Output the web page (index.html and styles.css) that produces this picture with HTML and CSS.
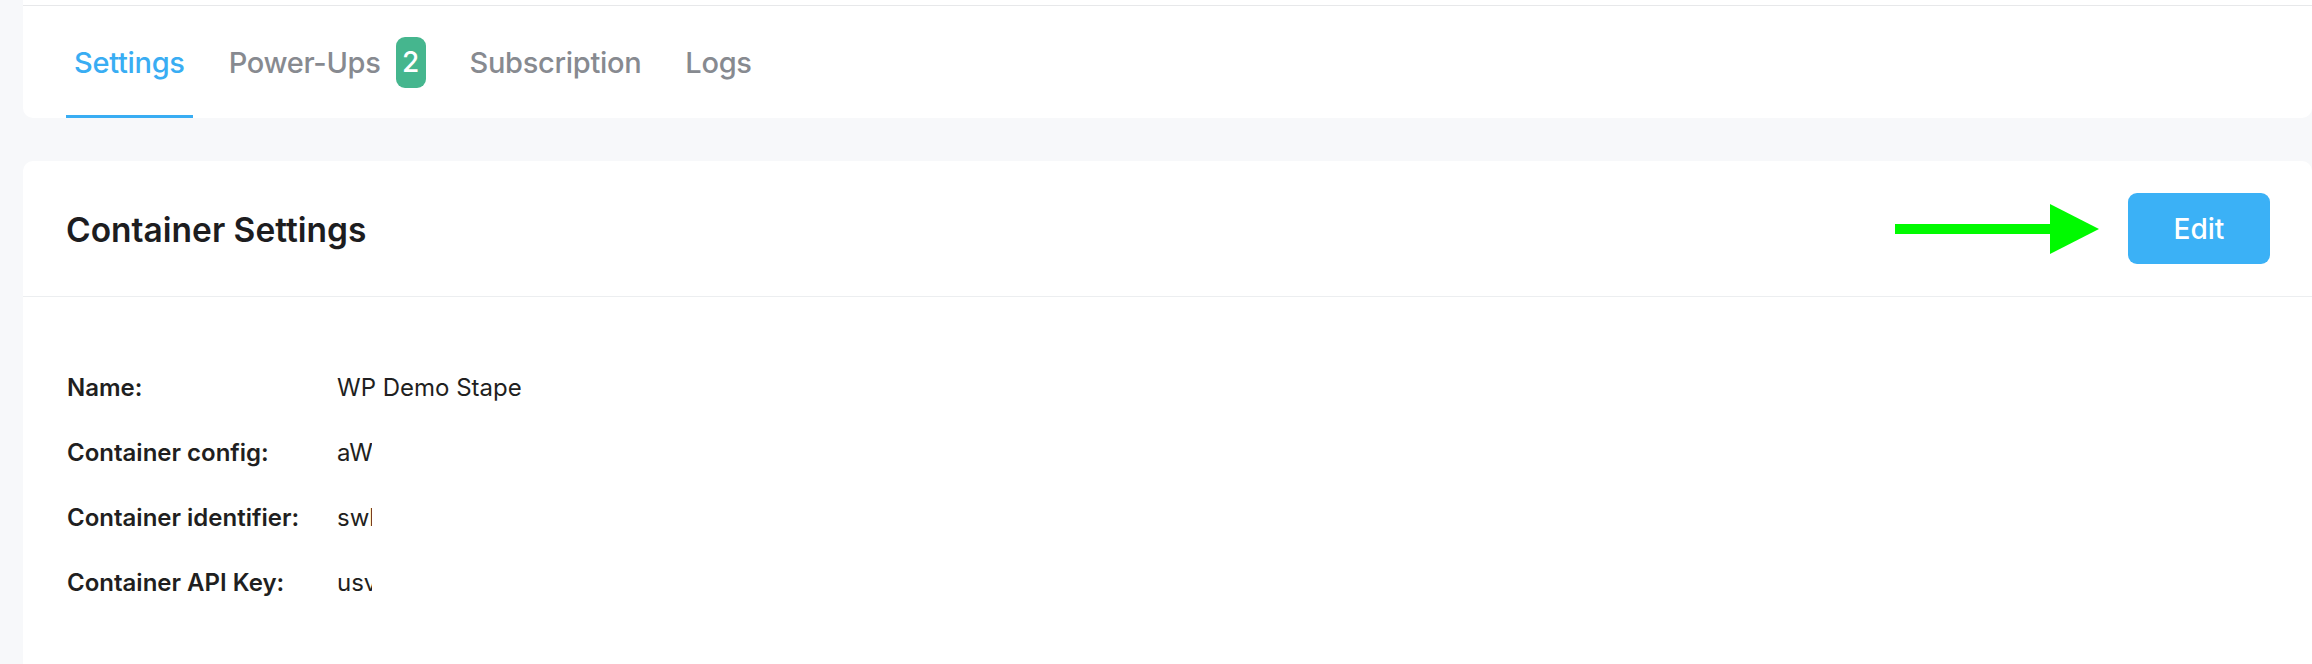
FILE: index.html
```html
<!DOCTYPE html>
<html lang="en">
<head>
<meta charset="utf-8">
<title>Container Settings</title>
<link rel="stylesheet" href="styles.css">
</head>
<body>
<div class="page">
  <div class="tabs-card">
    <div class="tabs-top"></div>
    <nav class="tabs">
      <a class="tab active">Settings</a>
      <a class="tab">Power-Ups<span class="badge">2</span></a>
      <a class="tab">Subscription</a>
      <a class="tab">Logs</a>
    </nav>
  </div>

  <section class="panel">
    <header class="panel-head">
      <h2 class="panel-title">Container Settings</h2>
      <div class="panel-actions">
        <svg class="arrow" width="204" height="50" viewBox="0 0 204 50" aria-hidden="true">
          <rect x="0" y="20" width="156" height="10" fill="#00fa00"/>
          <polygon points="155,0 204,25 155,50" fill="#00fa00"/>
        </svg>
        <button class="btn-edit">Edit</button>
      </div>
    </header>
    <div class="panel-body">
      <dl class="info">
        <dt>Name:</dt><dd>WP Demo Stape</dd>
        <dt>Container config:</dt><dd><span class="masked">aW</span></dd>
        <dt>Container identifier:</dt><dd><span class="masked">swl</span></dd>
        <dt>Container API Key:</dt><dd><span class="masked">usv</span></dd>
      </dl>
    </div>
  </section>
</div>
</body>
</html>
```

FILE: styles.css
```css
* { box-sizing: border-box; }

html, body {
  margin: 0;
  padding: 0;
  background: #f7f8fa;
  font-family: Inter, "Noto Sans", "Liberation Sans", sans-serif;
  overflow: hidden;
}

.page {
  padding-left: 23px;
  height: 664px;
  display: flex;
  flex-direction: column;
}

.tabs-card {
  background: #ffffff;
  border-radius: 0 0 10px 10px;
}

.tabs-top {
  height: 6px;
  border-bottom: 1px solid #e7e8ea;
}

.tabs {
  display: flex;
  align-items: stretch;
  height: 112px;
  padding-left: 43px;
  gap: 28px;
}

.tab {
  display: flex;
  align-items: center;
  padding: 0 8px;
  font-size: 29px;
  font-weight: 500;
  color: #878a90;
  text-decoration: none;
  letter-spacing: -0.3px;
}

.tab.active {
  color: #39adf3;
  box-shadow: inset 0 -3px 0 #39adf3;
}

.badge {
  display: inline-flex;
  align-items: center;
  justify-content: center;
  width: 30px;
  height: 51px;
  margin-left: 15px;
  border-radius: 9px;
  background: #45b68e;
  color: #ffffff;
  font-size: 28px;
  font-weight: 500;
}

.panel {
  margin-top: 43px;
  flex: 1;
  background: #ffffff;
  border-radius: 10px 10px 0 0;
}

.panel-head {
  display: flex;
  align-items: center;
  justify-content: space-between;
  height: 136px;
  padding: 0 42px 0 43px;
  border-bottom: 1px solid #eceef0;
}

.panel-title {
  margin: 0;
  font-size: 33.5px;
  font-weight: 600;
  color: #1d1d1f;
  letter-spacing: 0;
  padding-top: 2px;
}

.panel-actions {
  display: flex;
  align-items: center;
  gap: 29px;
}

.arrow {
  display: block;
}

.btn-edit {
  width: 142px;
  height: 71px;
  border: none;
  border-radius: 9px;
  background: #3bb1f6;
  color: #ffffff;
  font-family: inherit;
  font-size: 28px;
  font-weight: 500;
  cursor: pointer;
}

.panel-body {
  padding: 75px 43px 0 44px;
}

.info {
  display: grid;
  grid-template-columns: 270px 1fr;
  row-gap: 33px;
  margin: 0;
  font-size: 24px;
  line-height: 32px;
  color: #1f1f21;
}

.info dt {
  font-weight: 600;
}

.info dd {
  margin: 0;
  font-weight: 400;
}

.masked {
  display: inline-block;
  max-width: 35px;
  overflow: hidden;
  white-space: nowrap;
  vertical-align: top;
}
```
